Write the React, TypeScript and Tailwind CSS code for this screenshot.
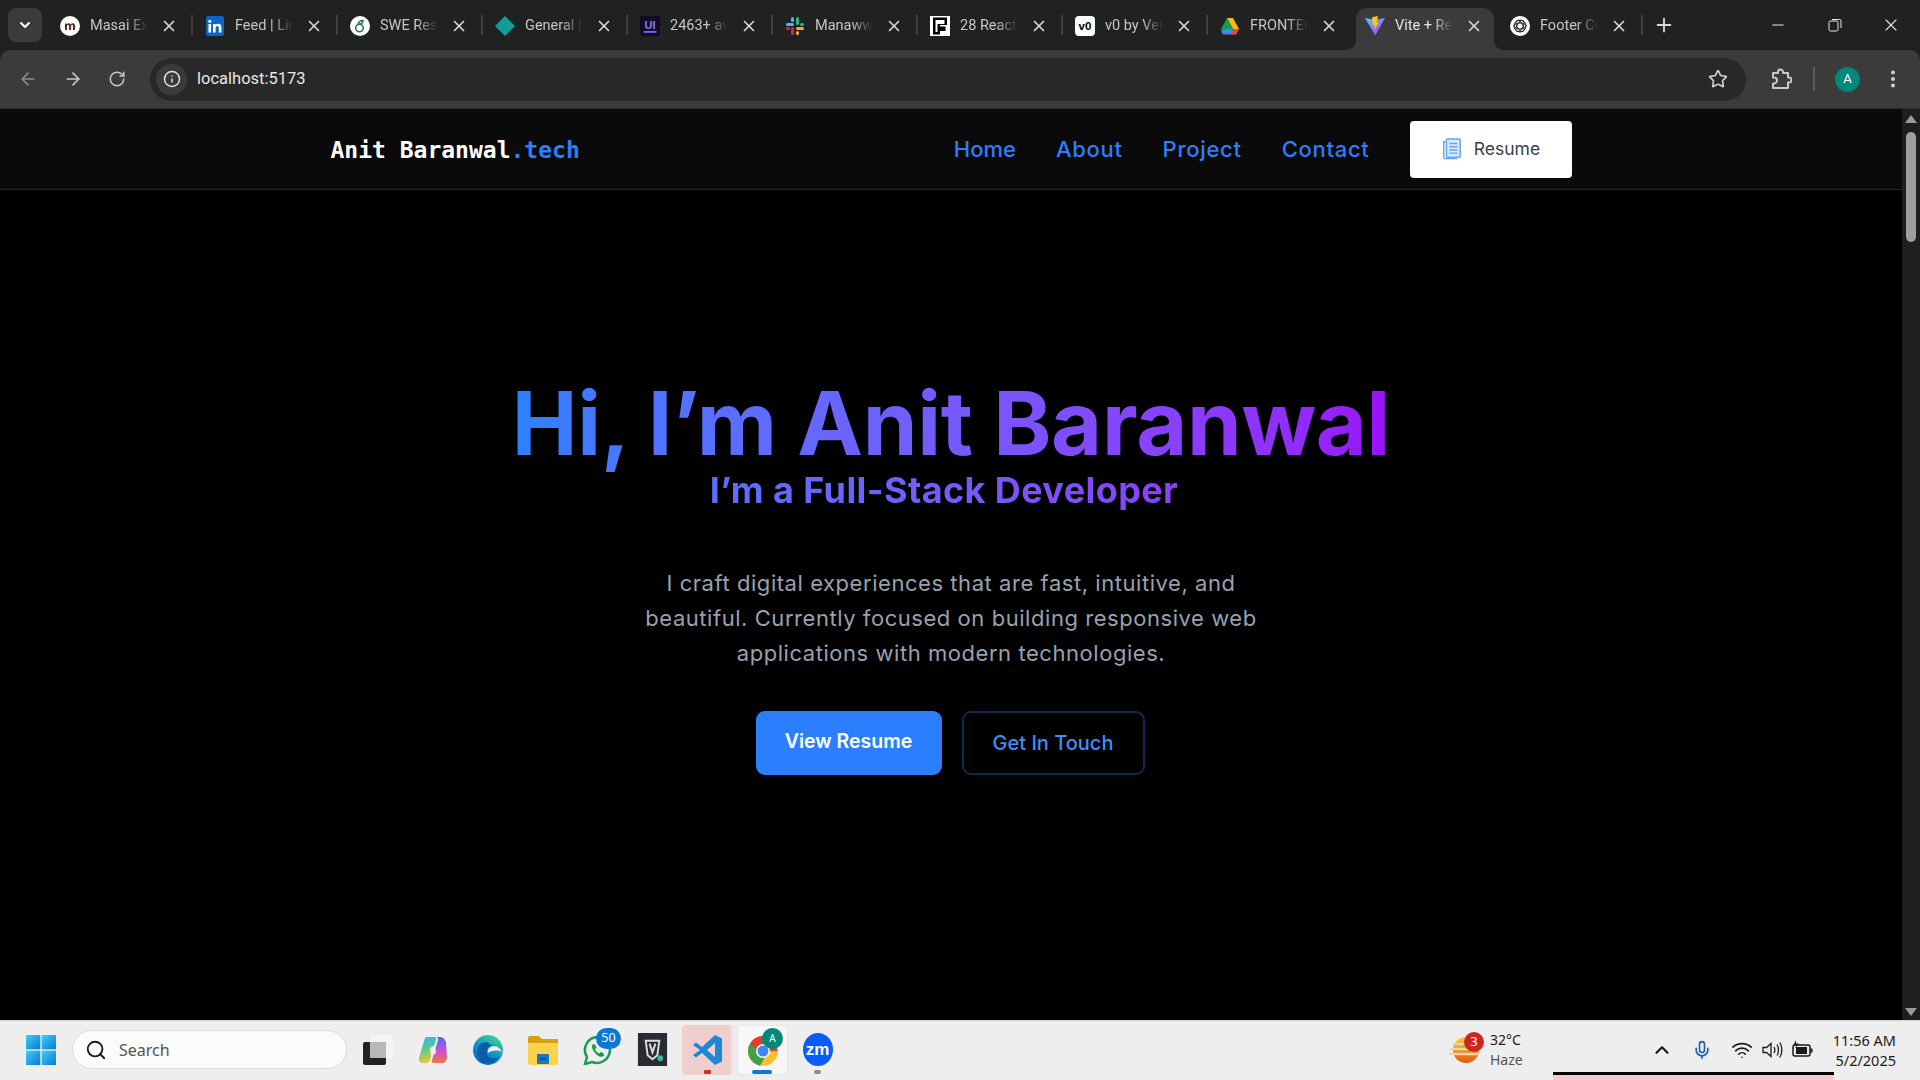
import React from "react";
import { ArrowLeft, ArrowRight, RotateCw, Info, Star, EllipsisVertical, X, Plus, Minus, ChevronDown, ChevronUp, Mic, Wifi, Search } from "lucide-react";

const I = ({ children, vb = "0 0 20 20", c = "w-5 h-5" }: { children: React.ReactNode; vb?: string; c?: string }) => (
  <svg viewBox={vb} className={c + " shrink-0"}>{children}</svg>
);

const favicons: React.ReactNode[] = [
  <I key="m"><circle cx="10" cy="10" r="10" fill="#fff" /><path d="M5 14V7.500h1.800V8.400C7.400 7.600 8.100 7.300 8.800 7.300c.8 0 1.400.4 1.700 1.100.6-.7 1.400-1.100 2.200-1.100C14.200 7.300 15 8.200 15 9.800V14h-2V10.200c0-.8-.2-1.200-.8-1.200s-1.100.5-1.100 1.300V14h-2V10.200c0-.8-.2-1.200-.8-1.200S7 9.500 7 10.300V14H5z" fill="#5a2a1e" /></I>,
  <I key="in"><rect width="18" height="20" x="1" rx="2" fill="#0a66c2" /><rect x="3.500" y="8" width="2.600" height="8.500" fill="#fff" /><circle cx="4.800" cy="5.200" r="1.500" fill="#fff" /><path d="M8 8h2.500v1.200C11 8.400 12 7.800 13.200 7.800c2.300 0 3.200 1.400 3.200 3.700v5h-2.600v-4.500c0-1.200-.4-1.900-1.400-1.900s-1.800.8-1.800 2v4.400H8z" fill="#fff" /></I>,
  <I key="s"><circle cx="10" cy="10" r="10" fill="#fff" /><circle cx="9.500" cy="12" r="3.800" fill="none" stroke="#1f7a45" strokeWidth="1.500" /><path d="M8 8.500C8.500 6 10.500 4.500 13 4.500c0 2-1.500 3.500-3.500 3.800" fill="none" stroke="#1f7a45" strokeWidth="1.500" /></I>,
  <I key="d"><path d="M10 0l10 10-10 10L0 10z" fill="#0f9d9a" /></I>,
  <I key="u"><rect width="20" height="20" rx="3" fill="#120b26" /><text x="10" y="12.500" fontSize="11" fontWeight="700" fill="#8b7bf0" textAnchor="middle" fontFamily="Liberation Sans, sans-serif">UI</text><rect x="3.500" y="15" width="13" height="1.800" fill="#8b5cf6" /></I>,
  <I key="sl">
    <rect x="1" y="7" width="8" height="3" rx="1.500" fill="#36c5f0" /><rect x="6" y="1" width="3" height="5" rx="1.500" fill="#36c5f0" />
    <rect x="11" y="1" width="3" height="8" rx="1.500" fill="#2eb67d" /><rect x="15" y="7" width="4" height="3" rx="1.500" fill="#2eb67d" />
    <rect x="11" y="11" width="8" height="3" rx="1.500" fill="#ecb22e" /><rect x="11" y="15" width="3" height="4" rx="1.500" fill="#ecb22e" />
    <rect x="6" y="11" width="3" height="8" rx="1.500" fill="#e01e5a" /><rect x="1" y="11" width="4" height="3" rx="1.500" fill="#e01e5a" />
  </I>,
  <I key="f"><rect width="20" height="20" fill="#fff" /><path d="M3 1.500h14v7.500H10v1.500h5.500v4.500H10v3.500H3z" fill="#000" /><path d="M5.500 4v12H7.500V8h7V4z" fill="#fff" /></I>,
  <I key="v"><rect width="20" height="20" rx="4" fill="#fff" /><text x="10" y="14" fontSize="11.500" fontWeight="700" fill="#000" textAnchor="middle" fontFamily="Liberation Sans, sans-serif">v0</text></I>,
  <I key="g"><path d="M7 2h6l6 11h-6z" fill="#fbbc04" /><path d="M7 2l6 11-3 5H4l-3-5z" fill="#0f9d58" /><path d="M1 15l2 3.500h13l3-5.500H7z" fill="#4285f4" /><path d="M13 13h6l-3 5.500H10z" fill="#ea4335" /></I>,
  <I key="vite"><path d="M0 2l10 1.800L20 2 10.300 19.500z" fill="url(#vg)" /><defs><linearGradient id="vg" x1="0" y1="0" x2="0.800" y2="1"><stop offset="0" stopColor="#41d1ff" /><stop offset="1" stopColor="#bd34fe" /></linearGradient></defs><path d="M13 0L7 1.200l.8 8 2-.5-.5 5.500 4.500-8-2.200.4z" fill="#ffc517" /></I>,
  <I key="oa"><circle cx="10" cy="10" r="10" fill="#fff" /><g fill="none" stroke="#222" strokeWidth="1"><circle cx="10" cy="10" r="6" /><ellipse cx="10" cy="10" rx="6" ry="3" /><ellipse cx="10" cy="10" rx="6" ry="3" transform="rotate(60 10 10)" /><ellipse cx="10" cy="10" rx="6" ry="3" transform="rotate(120 10 10)" /></g></I>,
];

const titles = ["Masai Exam", "Feed | LinkedIn", "SWE Resume", "General | Slack", "2463+ awesome", "Manawwar", "28 React Hooks", "v0 by Vercel", "FRONTEND", "Vite + React", "Footer Comp"];

function Tab({ i }: { i: number }) {
  const active = i === 9;
  return (
    <div className="relative flex w-[145px] h-[42px] items-center pl-[12px] pb-[6px] shrink-0">
      {active && (
        <div className="absolute left-[3px] right-[4px] top-0 bottom-0 bg-[#3b3b3b] rounded-t-[11px]">
          <svg viewBox="0 0 10 10" className="absolute left-[-10px] bottom-0 w-[10px] h-[10px]"><path d="M10 0v10H0C6 10 10 6 10 0z" fill="#3b3b3b" /></svg>
          <svg viewBox="0 0 10 10" className="absolute right-[-10px] bottom-0 w-[10px] h-[10px]"><path d="M0 0v10h10C4 10 0 6 0 0z" fill="#3b3b3b" /></svg>
        </div>
      )}
      <div className="relative flex items-center">
        {favicons[i]}
        <span className={"ml-[10px] w-[60px] overflow-hidden whitespace-nowrap text-[14.500px] [mask-image:linear-gradient(to_right,black_62%,transparent_96%)] " + (active ? "text-[#e4e4e4]" : "text-[#c4c7c5]")}>{titles[i]}</span>
        <X className="ml-[10px] w-[18px] h-[18px] text-[#d8d8d8]" strokeWidth={2.2} />
      </div>
      {i !== 8 && i !== 9 && <div className="absolute right-0 top-[7px] w-[2px] h-[20px] bg-[#3f3f3f]" />}
    </div>
  );
}

function ChromeBar() {
  return (
    <div className="bg-[#202222] font-['Roboto',sans-serif]">
      <div className="flex h-[50px] items-end">
        <div className="w-[34px] h-[34px] ml-[8px] mr-[6px] mb-[8px] rounded-lg bg-[#3b3b3b] flex items-center justify-center">
          <ChevronDown className="w-[16px] h-[16px] text-white" strokeWidth={3} />
        </div>
        {titles.map((_, i) => <Tab key={i} i={i} />)}
        <div className="mb-[14px] ml-[10px] flex items-center">
          <Plus className="w-[22px] h-[22px] text-[#d8d8d8]" strokeWidth={2} />
        </div>
        <div className="ml-auto flex items-center self-start h-[50px] text-[#e6e6e6]">
          <Minus className="w-[18px] h-[18px] mr-[1px]" strokeWidth={1.5} />
          <svg viewBox="0 0 14 14" className="w-[14px] h-[14px] ml-[40px]"><rect x="1" y="3" width="9" height="10" rx="1.500" fill="none" stroke="currentColor" /><path d="M4 1.500h7.500a1.500 1.500 0 0 1 1.500 1.500v7" fill="none" stroke="currentColor" /></svg>
          <X className="w-[20px] h-[20px] ml-[39px] mr-[19px]" strokeWidth={1.3} />
        </div>
      </div>
      <div className="flex h-[59px] items-center bg-[#3b3b3b] rounded-t-[10px] border-b border-[#2e2e2e]">
        <ArrowLeft className="ml-[18px] w-[20px] h-[20px] text-[#8a8a8a]" strokeWidth={2} />
        <ArrowRight className="ml-[25px] w-[20px] h-[20px] text-[#c8c8c8]" strokeWidth={2} />
        <RotateCw className="ml-[25px] w-[18px] h-[18px] text-[#c8c8c8]" strokeWidth={2} />
        <div className="ml-[24px] flex h-[43px] w-[1596px] items-center rounded-full bg-[#282828]">
          <div className="ml-[6px] flex w-[31px] h-[31px] items-center justify-center rounded-full bg-[#3b3b3b]">
            <Info className="w-[18px] h-[18px] text-[#e0e0e0]" strokeWidth={2} />
          </div>
          <span className="ml-[10px] pt-[1px] text-[16.500px] text-[#e8e8e8]">localhost:5173</span>
          <Star className="ml-auto mr-[18px] w-[20px] h-[20px] text-[#d0d0d0]" strokeWidth={2} />
        </div>
        <svg viewBox="0 0 22 22" className="ml-[24px] w-[22px] h-[22px]" fill="none" stroke="#c8c8c8" strokeWidth="2" strokeLinejoin="round">
          <path d="M3 5h5V4a2.500 2.500 0 0 1 5 0v1h5v4.500h1a2.500 2.500 0 0 1 0 5h-1V20H3v-4.500h1a3 3 0 0 0 0-6H3z" />
        </svg>
        <div className="ml-[21px] w-[2px] h-[24px] bg-[#5a5a5a]" />
        <div className="ml-[20px] w-[25px] h-[25px] rounded-full bg-[#00897b] text-white text-[13px] flex items-center justify-center">A</div>
        <EllipsisVertical className="ml-[22px] w-[22px] h-[22px] text-[#d0d0d0]" strokeWidth={2.4} />
      </div>
    </div>
  );
}

function NavBar() {
  return (
    <header className="h-[81px] bg-[#0a0a0a] border-b border-[#262626] flex justify-center">
      <div className="w-[1241px] flex items-center">
        <div className="pt-[2px] text-[23px] font-bold text-white font-['DejaVu_Sans_Mono',monospace]">Anit Baranwal<span className="text-[#2b7fff]">.tech</span></div>
        <nav className="ml-auto flex items-center gap-[40px] text-[22px] font-medium tracking-[0.7px] text-[#2b7fff] font-['Inter',sans-serif]">
          <a className="tracking-[0px]">Home</a><a>About</a><a>Project</a><a>Contact</a>
        </nav>
        <button className="ml-[40px] flex h-[57px] w-[162px] items-center justify-center gap-[12px] rounded-[4px] bg-white text-[17.500px] text-[#374151] font-['Inter',sans-serif]">
          <svg viewBox="0 0 22 24" className="w-[21px] h-[22px]" fill="none" stroke="#60a5fa" strokeWidth="1.600"><path d="M5 4H2.500v17a1.500 1.500 0 0 0 1.500 1.500h13" /><rect x="5.500" y="1" width="15" height="20" rx="1" fill="#dbeafe" /><path d="M8.500 6h9M8.500 9.500h9M8.500 13h9M8.500 16.500h9" /></svg>
          Resume
        </button>
      </div>
    </header>
  );
}

function Hero() {
  return (
    <main className="flex flex-col items-center font-['Inter',sans-serif]">
      <div className="mt-[183px] flex flex-col items-center bg-gradient-to-r from-[#2b7fff] to-[#9810fa] bg-clip-text text-transparent">
        <h1 className="text-[88px] leading-[100px] font-bold tracking-[-0.3px] whitespace-nowrap">Hi, I’m Anit Baranwal</h1>
        <h2 className="text-[36px] leading-[40px] font-bold mt-[-3px] mr-[14px] tracking-[0.4px]">I’m a Full-Stack Developer</h2>
      </div>
      <p className="mt-[56px] text-center text-[22px] leading-[35px] tracking-[0.55px] text-[#99a1af]">
        I craft digital experiences that are fast, intuitive, and<br />beautiful. Currently focused on building responsive web<br />applications with modern technologies.
      </p>
      <div className="mt-[40px] mr-[2px] flex gap-[20px]">
        <button className="h-[64px] w-[186px] rounded-[9px] bg-[#2b7fff] pb-[2px] text-[19.500px] font-semibold text-white">View Resume</button>
        <button className="h-[64px] w-[183px] rounded-[9px] border-2 border-[#10294f] text-[20px] font-medium text-[#3f8ff5]">Get In Touch</button>
      </div>
    </main>
  );
}

function Scrollbar() {
  return (
    <div className="w-[18px] h-full bg-[#1e1e1e] flex flex-col items-center shrink-0">
      <svg viewBox="0 0 12 8" className="mt-[6px] w-[12px] h-[8px]"><path d="M6 0l6 8H0z" fill="#9a9a9a" /></svg>
      <div className="mt-[9px] w-[10px] h-[110px] rounded-full bg-[#9e9e9e]" />
      <svg viewBox="0 0 12 8" className="mt-auto mb-[4px] w-[12px] h-[8px]"><path d="M6 8L12 0H0z" fill="#9a9a9a" /></svg>
    </div>
  );
}

const Slot = ({ children, className = "" }: { children: React.ReactNode; className?: string }) => (
  <div className={"relative w-[55px] h-[50px] flex items-center justify-center shrink-0 " + className}>{children}</div>
);

function Taskbar() {
  return (
    <div className="relative h-[60px] pb-[2px] bg-[#eeeeee] border-t border-[#cfcfcf] flex items-center font-['Noto_Sans',sans-serif] text-[#1a1a1a]">
      <svg viewBox="0 0 30 30" className="ml-[26px] w-[30px] h-[30px] shrink-0">
        <defs><linearGradient id="wg" x1="0" y1="0" x2="1" y2="1"><stop offset="0" stopColor="#3fd0f8" /><stop offset="1" stopColor="#0a78d4" /></linearGradient></defs>
        <rect width="14.300" height="14.300" fill="url(#wg)" /><rect x="15.700" width="14.300" height="14.300" fill="url(#wg)" /><rect y="15.700" width="14.300" height="14.300" fill="url(#wg)" /><rect x="15.700" y="15.700" width="14.300" height="14.300" fill="url(#wg)" />
      </svg>
      <div className="ml-[16px] flex h-[39px] w-[275px] items-center rounded-full border border-[#dcdcdc] bg-[#fbfbfb] shrink-0">
        <Search className="ml-[12px] w-[22px] h-[22px] text-[#1a1a1a]" strokeWidth={2} />
        <span className="ml-[12px] text-[16px] text-[#555]">Search</span>
      </div>
      <div className="ml-[3px] flex shrink-0">
        <Slot>
          <svg viewBox="0 0 30 30" className="w-[30px] h-[30px]"><rect x="0" y="7" width="23" height="23" rx="2" fill="#222" /><rect x="7" y="0" width="23" height="23" rx="2" fill="#f4f4f4" opacity="0.9" /><rect x="7" y="7" width="16" height="16" fill="#b8b8b8" /></svg>
        </Slot>
        <Slot>
          <svg viewBox="0 0 30 30" className="w-[30px] h-[30px]">
            <defs>
              <linearGradient id="cp" x1="0.300" y1="0" x2="0.500" y2="1"><stop offset="0" stopColor="#2fb5ef" /><stop offset="0.450" stopColor="#5cc98a" /><stop offset="1" stopColor="#f4c430" /></linearGradient>
              <linearGradient id="cp2" x1="0.500" y1="0" x2="0.500" y2="1"><stop offset="0" stopColor="#4a6df0" /><stop offset="0.500" stopColor="#c94fd8" /><stop offset="1" stopColor="#f8743a" /></linearGradient>
            </defs>
            <path d="M9 2h7c2 0 2.500 1.500 2 3l-6 20c-.5 2-2 3-4 3H5C2 28 .5 26 1 23L6 6c.5-2 1.500-4 3-4z" fill="url(#cp)" />
            <path d="M17 2h5c3 0 5 2 6 5l1 15c0 3-2 6-5 6h-8c-2 0-3-1-2-3l6-20c.5-1 0-3-3-3z" fill="url(#cp2)" />
            <path d="M12 13l5-3 1 8-5 3z" fill="#eeeeee" />
          </svg>
        </Slot>
        <Slot>
          <svg viewBox="0 0 30 30" className="w-[30px] h-[30px]">
            <defs><linearGradient id="eg" x1="0.800" y1="0" x2="0.200" y2="1"><stop offset="0" stopColor="#46d88f" /><stop offset="0.500" stopColor="#1596c8" /><stop offset="1" stopColor="#0b5fb8" /></linearGradient></defs>
            <circle cx="15" cy="15" r="15" fill="url(#eg)" /><path d="M29 17c-1-5-6-7-10-6-4 .5-6 4-5 8 1 4 6 6 12 3-3 5-10 8-16 5-5-3-7-9-5-14 1-4 5-6 9-6" fill="#0b5cab" /><path d="M15 18c-1-4 2-7 6-7 4 0 7 3 8 6-4-2-9-2-14 1z" fill="#eeeeee" />
          </svg>
        </Slot>
        <Slot>
          <svg viewBox="0 0 30 30" className="w-[30px] h-[30px]"><path d="M0 3a2 2 0 0 1 2-2h9l3 3h16v4H0z" fill="#d6a10f" /><path d="M0 8h30v20a2 2 0 0 1-2 2H2a2 2 0 0 1-2-2z" fill="#fbd24c" /><rect x="9" y="19" width="12" height="10" rx="1" fill="#1676c8" /><rect x="12" y="23" width="6" height="1.500" fill="#0b3f78" /></svg>
        </Slot>
        <Slot>
          <svg viewBox="0 0 30 30" className="w-[30px] h-[30px]"><path d="M15 2a13 13 0 0 0-11 20l-2 7 7-2A13 13 0 1 0 15 2z" fill="#eee" stroke="#1a9a52" strokeWidth="2.500" /><path d="M10 9c-2 2-1 6 3 10 3 3 6 3.500 8 2l-.5-3-3-1-1 1.500c-2-.5-4-2.500-4.500-4.500l1.500-1-1-3z" fill="#1a9a52" /></svg>
          <div className="absolute left-[26px] top-[3px] flex h-[21px] w-[25px] items-center justify-center rounded-full bg-[#0a78d4] text-[12.500px] text-white">50</div>
        </Slot>
        <Slot>
          <svg viewBox="0 0 30 34" className="w-[31px] h-[33px]"><rect width="30" height="34" fill="#2a2a34" /><path d="M8 8h14l-2 15-5 4-5-4z" fill="none" stroke="#ddd" strokeWidth="2" /><path d="M12 11l3 9 3-9" fill="none" stroke="#ddd" strokeWidth="2" /><circle cx="23" cy="26" r="3" fill="#3db8a5" /></svg>
        </Slot>
        <Slot>
          <div className="absolute inset-y-0 left-[2px] right-[2px] rounded-[4px] bg-[#efcfcd] border-r-[3px] border-[#f3dcda]" />
          <svg viewBox="0 0 30 30" className="relative w-[30px] h-[32px]"><path d="M22 0l7 3.500v23L22 30 9 18l-6 4.500L0 20l7-5-7-5 3-2.500L9 12z" fill="#1e88d8" /><path d="M22 8l-8 7 8 7z" fill="#efcfcd" /></svg>
          <div className="absolute bottom-[1px] left-[24px] w-[7px] h-[4px] rounded-[1px] bg-[#d32f2f]" />
        </Slot>
        <Slot>
          <div className="absolute inset-y-0 left-[2px] right-[2px] rounded-[4px] bg-[#f7f7f7] border border-[#e6e6e6]" />
          <svg viewBox="0 0 30 32" className="relative w-[30px] h-[32px]">
            <circle cx="15" cy="17" r="15" fill="#fbc02d" /><path d="M15 2a15 15 0 0 0-13 7.500L9 21l6-4h14A15 15 0 0 0 15 2z" fill="#e53935" /><path d="M2 9.500A15 15 0 0 0 12 31.700L19 20l-9-3z" fill="#43a047" /><circle cx="15" cy="17" r="7" fill="#fff" /><circle cx="15" cy="17" r="5.500" fill="#4285f4" />
          </svg>
          <div className="absolute left-[27px] top-[3px] flex h-[21px] w-[21px] items-center justify-center rounded-full bg-[#00897b] text-[10px] text-white">A</div>
          <div className="absolute bottom-[1px] left-[17px] w-[20px] h-[4px] rounded-full bg-[#0a78d4]" />
        </Slot>
        <Slot>
          <div className="w-[30px] h-[33px] rounded-[50%] bg-[#0b5cff] text-white text-[17px] font-bold flex items-center justify-center font-['Liberation_Sans',sans-serif]">zm</div>
          <div className="absolute bottom-[1px] left-[24px] w-[7px] h-[4px] rounded-full bg-[#8a8a8a]" />
        </Slot>
      </div>
      <div className="ml-auto flex items-center shrink-0">
        <div className="relative w-[32px] h-[32px]">
          <svg viewBox="0 0 32 32" className="w-[32px] h-[32px]"><defs><linearGradient id="sun" x1="0" y1="0" x2="0" y2="1"><stop offset="0" stopColor="#fbd02c" /><stop offset="1" stopColor="#e8560f" /></linearGradient></defs><circle cx="17" cy="16" r="13" fill="url(#sun)" /><path d="M5 10h20M1 15h24M1 20h28" stroke="#e8d8a8" strokeWidth="2.500" strokeLinecap="round" /></svg>
          <div className="absolute left-[15px] top-[-2px] flex h-[20px] w-[20px] items-center justify-center rounded-full bg-[#c8281e] text-[13px] text-white">3</div>
        </div>
        <div className="ml-[9px] w-[40px] text-[14px] leading-[20px]"><div>32°C</div><div className="text-[#555]">Haze</div></div>
        <ChevronUp className="ml-[121px] w-[22px] h-[22px]" strokeWidth={2.4} />
        <Mic className="ml-[19px] w-[20px] h-[22px] text-[#1f5fae]" strokeWidth={2} />
        <Wifi className="ml-[19px] w-[22px] h-[22px]" strokeWidth={1.8} />
        <svg viewBox="0 0 22 22" className="ml-[8px] w-[22px] h-[22px]" fill="none" stroke="#1a1a1a" strokeWidth="1.300"><path d="M2 8.500h3.500L10 4.500v13l-4.500-4H2z" /><path d="M13 8c1 1.800 1 4.200 0 6M16 5.500c2 3 2 8 0 11M18.800 3.500c2.700 4 2.700 11 0 15" /></svg>
        <svg viewBox="0 0 22 22" className="ml-[8px] w-[22px] h-[22px]"><rect x="2" y="6" width="17" height="11" rx="2" fill="none" stroke="#1a1a1a" strokeWidth="1.500" /><rect x="5" y="8" width="11" height="7" fill="#1a1a1a" /><rect x="19.500" y="9.500" width="2" height="4" fill="#1a1a1a" /><path d="M5 1L2.500 6h3L3.500 10 8 4.500H5z" fill="#1a1a1a" /></svg>
        <div className="ml-[11px] mr-[24px] w-[72px] text-right text-[14.500px] leading-[20px]"><div className="whitespace-nowrap">11:56 AM</div><div>5/2/2025</div></div>
      </div>
      <div className="absolute left-[1553px] top-[51px] h-[8px] w-[281px] border-t-[3px] border-black bg-[#f9c6cf]" />
    </div>
  );
}

export default function App() {
  return (
    <div className="w-[1920px] h-[1080px] overflow-hidden flex flex-col bg-black">
      <ChromeBar />
      <div className="flex flex-1 min-h-0">
        <div className="flex-1 bg-black overflow-hidden"><NavBar /><Hero /></div>
        <Scrollbar />
      </div>
      <Taskbar />
    </div>
  );
}
